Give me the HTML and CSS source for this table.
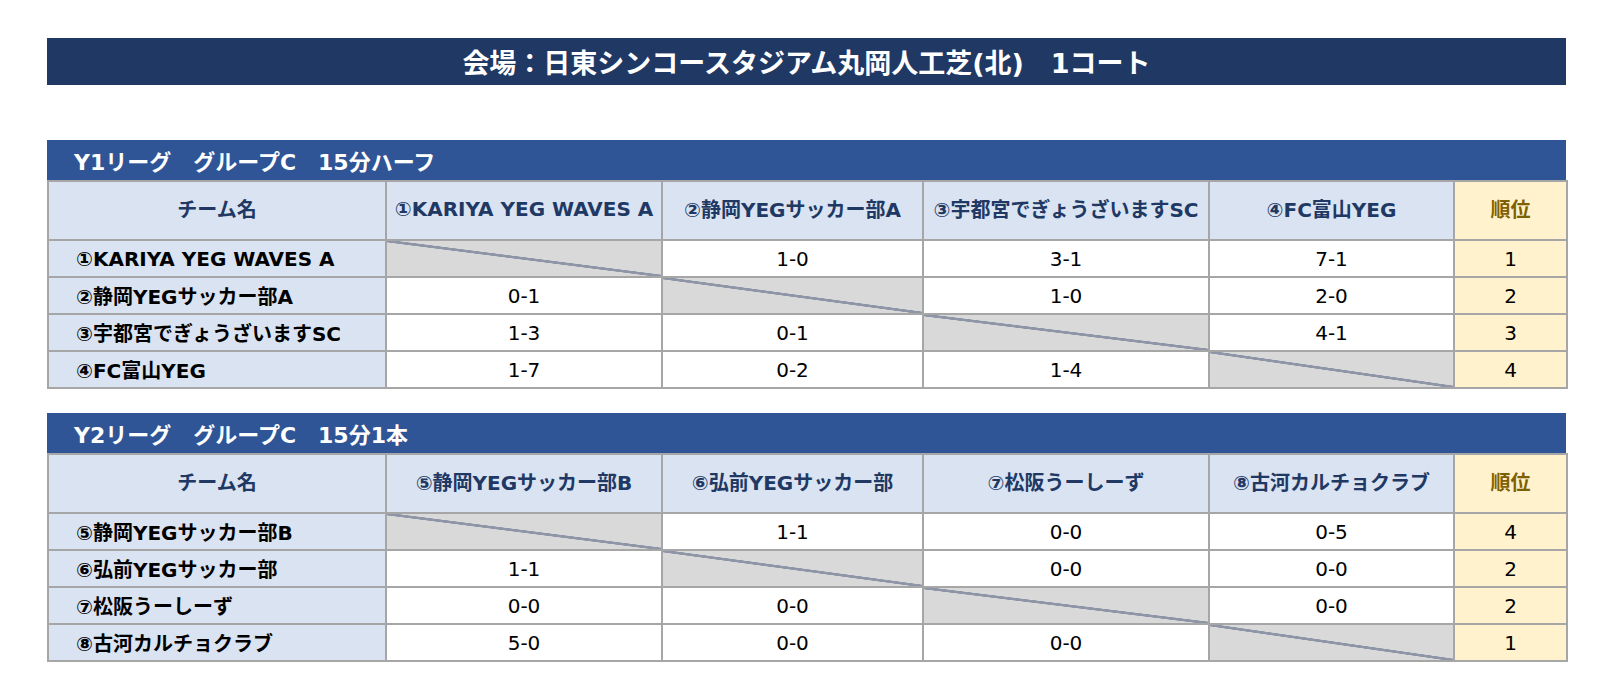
FILE: index.html
```html
<!DOCTYPE html>
<html lang="ja">
<head>
<meta charset="utf-8">
<title>会場：日東シンコースタジアム丸岡人工芝(北)</title>
<link rel="stylesheet" href="styles.css">
</head>
<body>
<div class="page">
  <div class="venue">会場：日東シンコースタジアム丸岡人工芝(北)　1コート</div>

  <section class="group">
    <div class="group-head">Y1リーグ　グループC　15分ハーフ</div>
    <table class="league">
      <colgroup>
        <col class="c-name"><col class="c1"><col class="c2"><col class="c3"><col class="c4"><col class="c-rank">
      </colgroup>
      <thead>
        <tr>
          <th>チーム名</th>
          <th>①KARIYA YEG WAVES A</th>
          <th>②静岡YEGサッカー部A</th>
          <th>③宇都宮でぎょうざいますSC</th>
          <th>④FC富山YEG</th>
          <th class="rank">順位</th>
        </tr>
      </thead>
      <tbody>
        <tr><td class="team">①KARIYA YEG WAVES A</td><td class="diag"></td><td>1-0</td><td>3-1</td><td>7-1</td><td class="rank">1</td></tr>
        <tr><td class="team">②静岡YEGサッカー部A</td><td>0-1</td><td class="diag"></td><td>1-0</td><td>2-0</td><td class="rank">2</td></tr>
        <tr><td class="team">③宇都宮でぎょうざいますSC</td><td>1-3</td><td>0-1</td><td class="diag"></td><td>4-1</td><td class="rank">3</td></tr>
        <tr><td class="team">④FC富山YEG</td><td>1-7</td><td>0-2</td><td>1-4</td><td class="diag"></td><td class="rank">4</td></tr>
      </tbody>
    </table>
  </section>

  <section class="group">
    <div class="group-head">Y2リーグ　グループC　15分1本</div>
    <table class="league">
      <colgroup>
        <col class="c-name"><col class="c1"><col class="c2"><col class="c3"><col class="c4"><col class="c-rank">
      </colgroup>
      <thead>
        <tr>
          <th>チーム名</th>
          <th>⑤静岡YEGサッカー部B</th>
          <th>⑥弘前YEGサッカー部</th>
          <th>⑦松阪うーしーず</th>
          <th>⑧古河カルチョクラブ</th>
          <th class="rank">順位</th>
        </tr>
      </thead>
      <tbody>
        <tr><td class="team">⑤静岡YEGサッカー部B</td><td class="diag"></td><td>1-1</td><td>0-0</td><td>0-5</td><td class="rank">4</td></tr>
        <tr><td class="team">⑥弘前YEGサッカー部</td><td>1-1</td><td class="diag"></td><td>0-0</td><td>0-0</td><td class="rank">2</td></tr>
        <tr><td class="team">⑦松阪うーしーず</td><td>0-0</td><td>0-0</td><td class="diag"></td><td>0-0</td><td class="rank">2</td></tr>
        <tr><td class="team">⑧古河カルチョクラブ</td><td>5-0</td><td>0-0</td><td>0-0</td><td class="diag"></td><td class="rank">1</td></tr>
      </tbody>
    </table>
  </section>
</div>
</body>
</html>
```

FILE: styles.css
```css
html, body {
  margin: 0;
  padding: 0;
  background: #ffffff;
}

body {
  font-family: "DejaVu Sans", "Noto Sans CJK JP", sans-serif;
  color: #000000;
}

.page {
  width: 1519px;
  padding: 38px 0 0 47px;
  display: flex;
  flex-direction: column;
}

.venue {
  height: 47px;
  background: #203864;
  color: #ffffff;
  font-weight: bold;
  font-size: 27px;
  display: flex;
  align-items: center;
  justify-content: center;
}

.group {
  margin-top: 55px;
}

.group + .group {
  margin-top: 24px;
}

.group-head {
  height: 40px;
  background: #2f5597;
  color: #ffffff;
  font-weight: bold;
  font-size: 22px;
  padding-left: 27px;
  display: flex;
  align-items: center;
}

.league {
  width: 1519px;
  border-collapse: collapse;
  table-layout: fixed;
  font-size: 20px;
}

.c-name { width: 338px; }
.c1 { width: 276px; }
.c2 { width: 261px; }
.c3 { width: 286px; }
.c4 { width: 245px; }
.c-rank { width: 113px; }

.league th,
.league td {
  border: 2px solid #a6a6a6;
  padding: 0;
  text-align: center;
  white-space: nowrap;
  overflow: hidden;
}

.league thead tr {
  height: 59px;
}

.league th {
  background: #dae3f1;
  color: #203864;
  font-weight: bold;
  padding-bottom: 4px;
}

.league tbody tr {
  height: 37px;
}

.league td {
  background: #ffffff;
}

.league td.team {
  background: #dae3f1;
  font-weight: bold;
  text-align: left;
  padding-left: 27px;
}

.league .rank {
  background: #fff2cc;
}

.league th.rank {
  color: #7f6000;
}

.league td.diag {
  background: linear-gradient(to top right,
    #d9d9d9 calc(50% - 1.6px),
    #8e95a6 calc(50% - 1.1px),
    #8e95a6 calc(50% + 1.1px),
    #d9d9d9 calc(50% + 1.6px));
}
```
